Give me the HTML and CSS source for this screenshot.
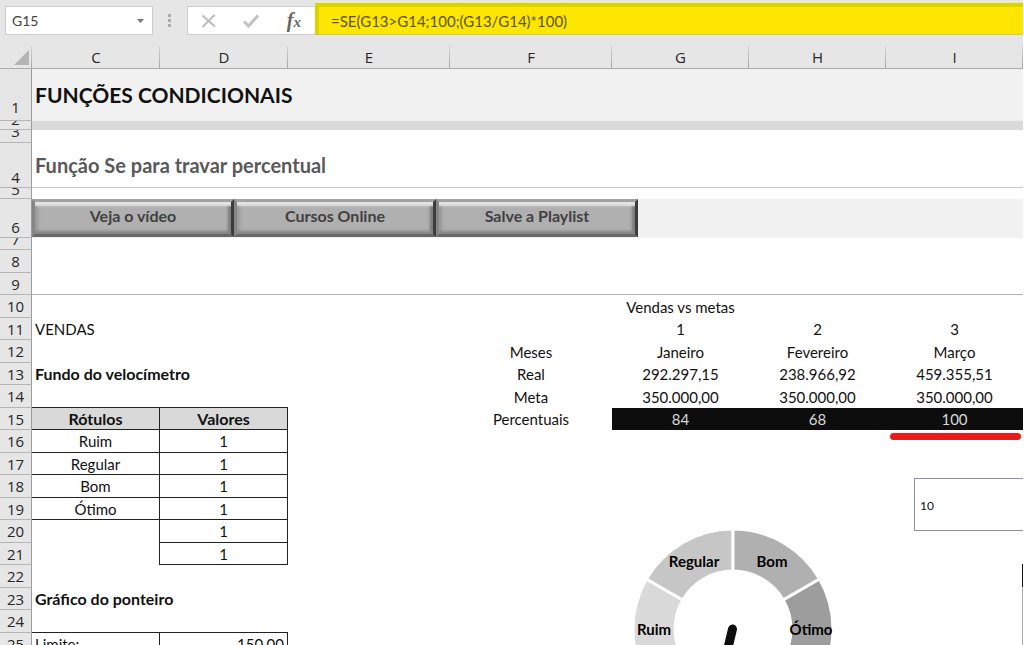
FILE: index.html
```html
<!DOCTYPE html>
<html lang="pt-BR">
<head>
<meta charset="utf-8">
<title>Funções condicionais</title>
<link rel="stylesheet" href="styles.css">
</head>
<body>
<main class="workbook">
  <header class="formula-bar">
    <div class="name-box">
      <input class="name-input" type="text" value="G15" aria-label="Caixa de nome">
      <button class="name-toggle" type="button" aria-label="Abrir lista de nomes"><svg width="7" height="4" viewBox="0 0 7 4"><path d="M0 0h7L3.500 4z" fill="#777"/></svg></button>
    </div>
    <svg class="grip" width="4" height="14" viewBox="0 0 4 14"><path d="M0 0h3v3H0zM0 5h3v3H0zM0 10h3v3H0z" fill="#a9a9a9"/></svg>
    <div class="tools">
      <button class="tool" type="button" aria-label="Cancelar"><svg width="16" height="14" viewBox="0 0 16 14"><path d="M1.500 1.500L14 12.500M13.500 1L1.500 13" fill="none" stroke="#bdbdbd" stroke-width="2"/></svg></button>
      <button class="tool" type="button" aria-label="Inserir"><svg width="16" height="14" viewBox="0 0 16 14"><path d="M1 7.500L5.500 12L15 1.500" fill="none" stroke="#c2c2c2" stroke-width="3"/></svg></button>
      <button class="tool fx" type="button" aria-label="Inserir função">f<span class="fx-small">x</span></button>
    </div>
    <input class="formula" type="text" value="=SE(G13&gt;G14;100;(G13/G14)*100)" aria-label="Fórmula">
  </header>

  <div class="sheet">
    <table class="grid">
      <colgroup><col class="col-head"><col class="col-c"><col class="col-d"><col class="col-e"><col class="col-f"><col class="col-g"><col class="col-h"><col></colgroup>
      <thead>
        <tr><th class="corner"><svg class="corner-mark" width="15" height="15" viewBox="0 0 15 15"><path d="M15 0v15H0z" fill="#b4b4b4"/></svg></th><th>C</th><th>D</th><th>E</th><th>F</th><th>G</th><th>H</th><th>I</th></tr>
      </thead>
      <tbody>
        <tr class="r-title"><th><div class="num">1</div></th><td colspan="7"><h1 class="title">FUNÇÕES CONDICIONAIS</h1></td></tr>
        <tr class="r-band"><th><div class="num">2</div></th><td colspan="7"></td></tr>
        <tr class="r-gap"><th><div class="num">3</div></th><td colspan="7"></td></tr>
        <tr class="r-subtitle"><th><div class="num">4</div></th><td colspan="7"><h2 class="subtitle">Função Se para travar percentual</h2></td></tr>
        <tr class="r-thin"><th><div class="num">5</div></th><td colspan="7"></td></tr>
        <tr class="r-buttons"><th><div class="num">6</div></th><td colspan="7"><div class="links"><button class="bevel" type="button">Veja o vídeo</button><button class="bevel" type="button">Cursos Online</button><button class="bevel" type="button">Salve a Playlist</button></div></td></tr>
        <tr class="r-seven"><th><div class="num">7</div></th><td colspan="7"></td></tr>
        <tr class="tall"><th>8</th><td colspan="7"></td></tr>
        <tr class="ruled"><th>9</th><td colspan="7"></td></tr>
        <tr class="tall"><th>10</th><td></td><td></td><td></td><td></td><td>Vendas vs metas</td><td></td><td></td></tr>
        <tr><th>11</th><td class="left">VENDAS</td><td></td><td></td><td></td><td>1</td><td>2</td><td>3</td></tr>
        <tr class="tall"><th>12</th><td></td><td></td><td></td><td>Meses</td><td>Janeiro</td><td>Fevereiro</td><td>Março</td></tr>
        <tr><th>13</th><td class="left strong" colspan="2">Fundo do velocímetro</td><td></td><td>Real</td><td>292.297,15</td><td>238.966,92</td><td>459.355,51</td></tr>
        <tr class="tall"><th>14</th><td class="line"></td><td class="line"></td><td></td><td>Meta</td><td>350.000,00</td><td>350.000,00</td><td>350.000,00</td></tr>
        <tr><th>15</th><td class="box shade">Rótulos</td><td class="box shade">Valores</td><td></td><td>Percentuais</td><td class="dark">84</td><td class="dark">68</td><td class="dark">100</td></tr>
        <tr class="tall"><th>16</th><td class="box">Ruim</td><td class="box">1</td><td colspan="5"></td></tr>
        <tr><th>17</th><td class="box">Regular</td><td class="box">1</td><td colspan="5"></td></tr>
        <tr class="tall"><th>18</th><td class="box">Bom</td><td class="box">1</td><td colspan="5"></td></tr>
        <tr><th>19</th><td class="box">Ótimo</td><td class="box">1</td><td colspan="5"></td></tr>
        <tr class="tall"><th>20</th><td class="side"></td><td class="box">1</td><td colspan="5"></td></tr>
        <tr><th>21</th><td class="side"></td><td class="box">1</td><td colspan="5"></td></tr>
        <tr class="tall"><th>22</th><td colspan="7"></td></tr>
        <tr><th>23</th><td class="left strong" colspan="2">Gráfico do ponteiro</td><td colspan="5"></td></tr>
        <tr class="tall"><th>24</th><td class="line"></td><td class="line"></td><td colspan="5"></td></tr>
        <tr><th>25</th><td class="box left">Limite:</td><td class="box right">150,00</td><td colspan="5"></td></tr>
      </tbody>
    </table>

    <div class="marker"></div>
    <div class="textbox">10</div>
    <div class="edge"></div>
    <svg class="gauge" width="204" height="200" viewBox="-102 -100 204 200" role="img" aria-label="Velocímetro">
      <g stroke="#fff" stroke-width="3">
        <path d="M-86.600 50A100 100 0 0 1 -86.600 -50L-50.200 -29A58 58 0 0 0 -50.200 29z" fill="#d9d9d9"/>
        <path d="M-86.600 -50A100 100 0 0 1 0 -100L0 -58A58 58 0 0 0 -50.200 -29z" fill="#c6c6c6"/>
        <path d="M0 -100A100 100 0 0 1 86.600 -50L50.200 -29A58 58 0 0 0 0 -58z" fill="#b0b0b0"/>
        <path d="M86.600 -50A100 100 0 0 1 86.600 50L50.200 29A58 58 0 0 0 50.200 -29z" fill="#9d9d9d"/>
      </g>
      <path d="M-0.500 0L-10 40" stroke="#0d0d0d" stroke-width="9" stroke-linecap="round"/>
      <g class="gauge-label"><text x="-39" y="-62">Regular</text><text x="39" y="-62">Bom</text><text x="-79" y="6">Ruim</text><text x="78" y="6">Ótimo</text></g>
    </svg>
  </div>
</main>
</body>
</html>
```
FILE: styles.css
```css
* { box-sizing: border-box; }
body { margin: 0; background: #fff; color: #111; font: 15px/20px Lato, "Open Sans", sans-serif; }
button, input { font: inherit; color: inherit; border: 0; padding: 0; margin: 0; background: none; }
.workbook { height: 100vh; overflow: hidden; padding-right: 1px; }

/* Formula bar */
.formula-bar { display: flex; align-items: flex-start; height: 46px; padding-top: 6px; background: #e6e6e6; }
.name-box { display: flex; width: 148px; height: 29px; margin-left: 5px; border: 1px solid #cdcdcd; background: #fff; }
.name-input { flex: 1; min-width: 0; padding-left: 6px; font-size: 14px; color: #444; }
.name-toggle { display: grid; place-items: center; width: 24px; }
.grip { margin: 8px 15px 0 15px; }
.tools { display: flex; width: 128px; height: 29px; border: 1px solid #cdcdcd; border-right: 0; background: #fff; }
.tool { flex: 1; display: grid; place-items: center; }
.fx { display: block; font: italic bold 20px/24px "Liberation Serif", serif; color: #666; }
.fx-small { font-size: 15px; }
.formula { flex: 1; min-width: 0; height: 32px; margin-top: -3px; padding: 0 0 0 12px; border: solid #d9d400; border-width: 4px 0 1px 4px; background: #ffe600; color: #5c5400; font-size: 15px; }

/* Cells */
.sheet { position: relative; }
.grid { width: 100%; table-layout: fixed; border-collapse: separate; border-spacing: 0; }
.col-head { width: 32px; }
.col-c { width: 128px; }
.col-d { width: 128px; }
.col-e, .col-f { width: 162px; }
.col-g, .col-h { width: 137px; }
.grid tr { height: 22px; }
.grid .tall { height: 23px; }
.grid td { padding: 0; text-align: center; white-space: nowrap; }
.grid th { padding: 0; font: 15px/20px "Open Sans", sans-serif; color: #262626; }
.grid tbody th { border-right: 1px solid #9c9c9c; border-bottom: 1px solid #b5b5b5; background: #e6e6e6; }
.grid thead th { height: 23px; border-bottom: 1px solid #ababab; background: linear-gradient(#d4d4d4, #a6a6a6) right / 1px 100% no-repeat #e6e6e6; }
.corner-mark { display: block; margin-left: 14px; }
.num { display: flex; align-items: flex-end; justify-content: center; overflow: hidden; line-height: 20px; }
.r-title .num { height: 51px; padding-bottom: 3px; }
.r-band .num { height: 8px; }
.r-gap .num { height: 12px; padding-bottom: 1px; }
.r-subtitle .num { height: 44px; }
.r-thin .num { height: 10px; line-height: 18px; }
.r-buttons .num { height: 38px; }
.r-seven .num { height: 11px; }
.grid .r-band, .grid .r-gap, .grid .r-thin, .grid .r-seven { height: auto; }
.r-title td { background: #f1f1f1; }
.r-band td { background: #d9d9d9; }
.r-subtitle td { border-bottom: 1px solid #c8c8c8; }
.r-buttons td { background: #f1f1f1; }
.ruled td { border-bottom: 1px solid #b5b5b5; }
.title, .subtitle { margin: 0; padding-left: 3px; text-align: left; font-weight: 700; }
.title { font-size: 21px; line-height: 28px; }
.subtitle { font-size: 20px; line-height: 24px; color: #595959; }
.grid .left { padding-left: 3px; text-align: left; }
.grid .right { padding-right: 3px; text-align: right; }
.strong { font-size: 16px; font-weight: 700; }
.line { border-bottom: 1px solid #222; }
.box { border-right: 1px solid #222; border-bottom: 1px solid #222; }
.side { border-right: 1px solid #222; }
.shade { background: #d9d9d9; font-size: 16px; font-weight: 700; }
.dark { background: #0d0d0d; color: #d9d9d9; }

/* Bevelled link buttons */
.links { display: flex; height: 39px; padding-bottom: 1px; }
.bevel { width: 202px; height: 38px; padding-bottom: 5px; border: 3px solid; border-color: #a2a2a2 #3c3c3c #686868 #858585; box-shadow: inset 0 5px 2px -1px #e2e2e2, inset 0 -4px 3px -1px #858585, inset -4px 0 3px -1px #777, inset 4px 0 3px -1px #9a9a9a; background: #b0b0b0; color: #404040; font-size: 16px; line-height: 20px; font-weight: 700; }

/* Objects floating over the cells */
.marker { position: absolute; top: 387px; right: 2px; width: 131px; height: 7px; border-radius: 4px; background: #e81c1c; }
.textbox { position: absolute; top: 432px; right: 0; width: 109px; height: 53px; padding: 17px 5px; border: 1px solid #8f8f9c; border-right: 0; font-size: 12px; }
.edge { position: absolute; top: 518px; right: 0; width: 1px; height: 100px; background: linear-gradient(#111 23px, #aaa 23px); }
.gauge { position: absolute; top: 483px; left: 631px; }
.gauge-label { font-size: 15px; font-weight: 700; text-anchor: middle; }
```
